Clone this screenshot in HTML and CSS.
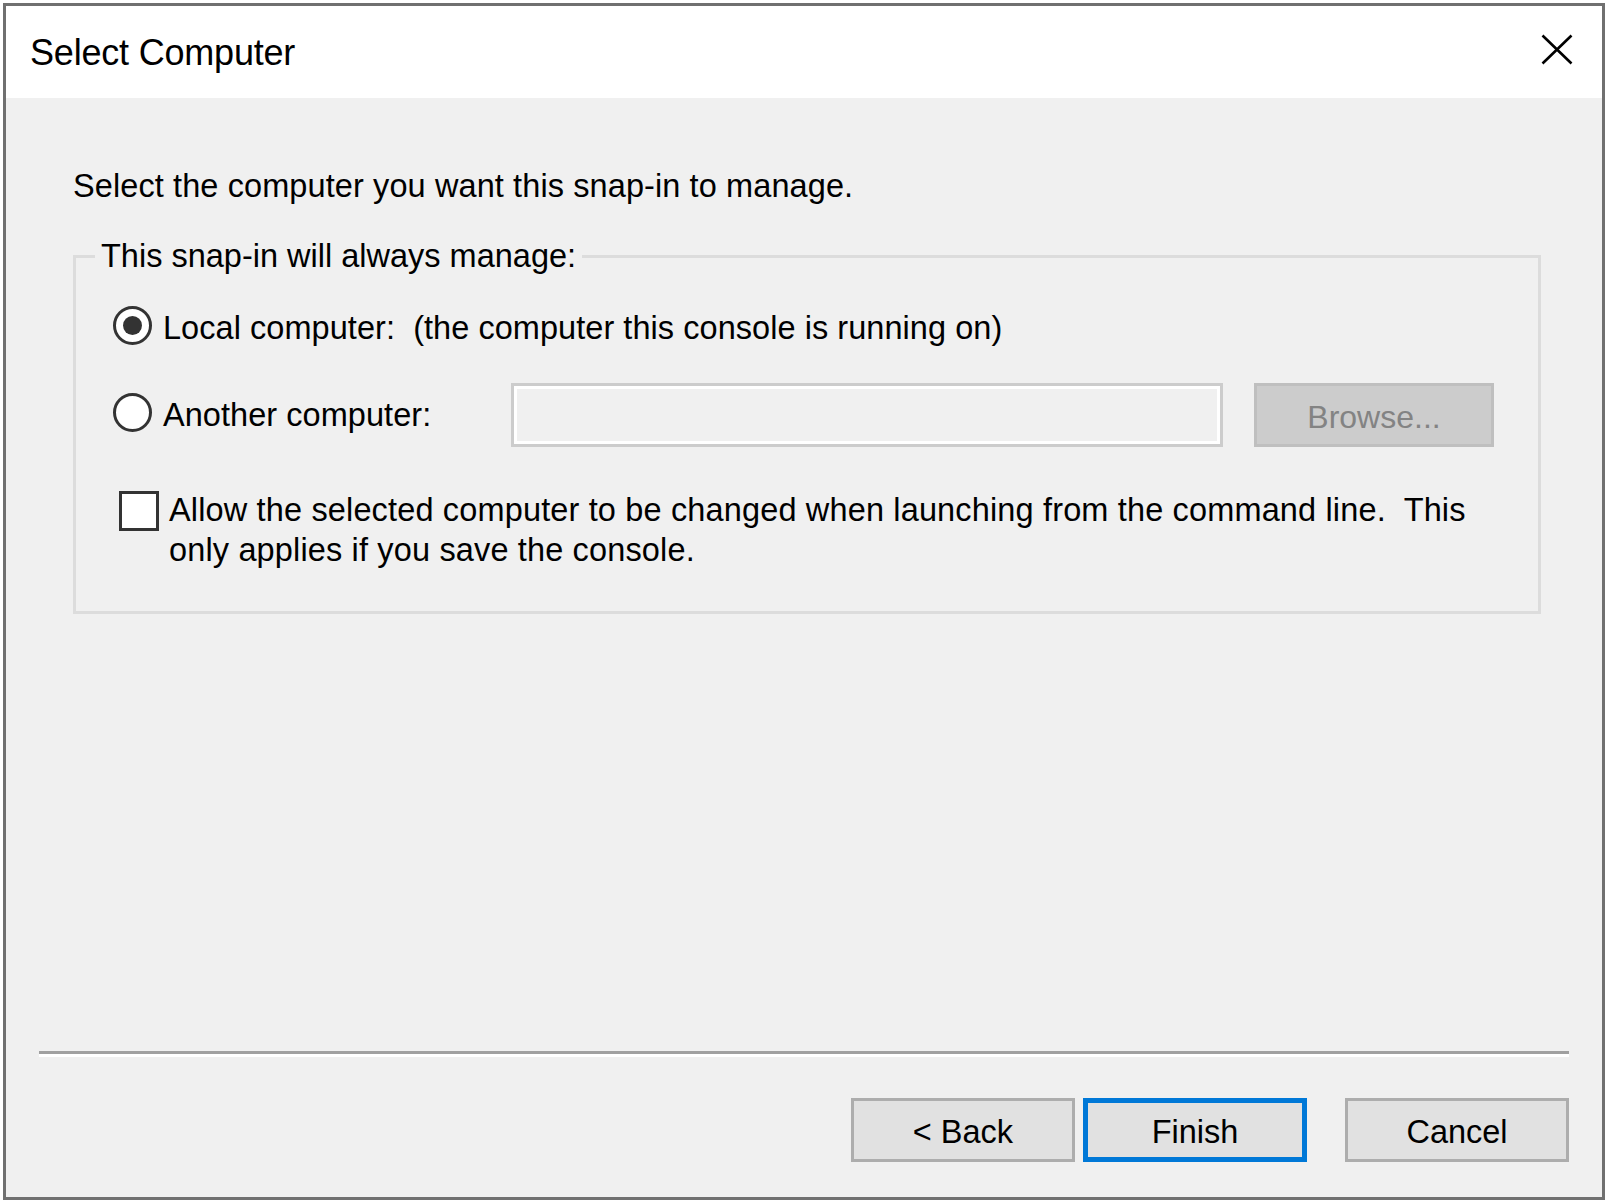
FILE: index.html
```html
<!DOCTYPE html>
<html>
<head>
<meta charset="utf-8">
<title>Select Computer</title>
<link rel="stylesheet" href="styles.css">
</head>
<body>
<div class="dialog">
  <div class="titlebar">
    <span class="title">Select Computer</span>
    <svg class="close" width="32" height="31" viewBox="0 0 32 31">
      <path d="M1.5 1.5 L30.5 29.5 M30.5 1.5 L1.5 29.5" stroke="#000" stroke-width="2.6" fill="none"/>
    </svg>
  </div>
  <div class="content">
    <p class="intro">Select the computer you want this snap-in to manage.</p>
    <fieldset class="group">
      <legend class="legend">This snap-in will always manage:</legend>
      <div class="row row-local">
        <span class="radio checked"><span class="dot"></span></span>
        <span class="label">Local computer:&nbsp; (the computer this console is running on)</span>
      </div>
      <div class="row row-other">
        <div class="radio-label">
          <span class="radio"></span>
          <span class="label">Another computer:</span>
        </div>
        <div class="textbox"></div>
        <div class="browse">Browse...</div>
      </div>
      <div class="row row-check">
        <span class="checkbox"></span>
        <span class="check-text">Allow the selected computer to be changed when launching from the command line.&nbsp; This<br>only applies if you save the console.</span>
      </div>
    </fieldset>
    <div class="spacer"></div>
    <div class="separator"></div>
    <div class="buttons">
      <div class="btn">&lt; Back</div>
      <div class="btn default">Finish</div>
      <div class="btn cancel">Cancel</div>
    </div>
  </div>
</div>
</body>
</html>
```

FILE: styles.css
```css
html, body {
  margin: 0;
  padding: 0;
  background: #ffffff;
}

body {
  font-family: "Liberation Sans", Arial, sans-serif;
  color: #000;
}

.dialog {
  box-sizing: border-box;
  width: 1602px;
  height: 1197px;
  margin: 3px 3px 2px 3px;
  border: 3px solid #707070;
  display: flex;
  flex-direction: column;
  background: #f0f0f0;
}

.titlebar {
  height: 92px;
  flex: none;
  background: #ffffff;
  display: flex;
  align-items: center;
  justify-content: space-between;
  padding: 0 29px 0 24px;
}

.title {
  font-size: 36px;
  line-height: 40px;
  letter-spacing: -0.2px;
  padding-top: 2px;
}

.close {
  display: block;
  margin-top: -6px;
}

.content {
  flex: 1;
  display: flex;
  flex-direction: column;
  padding: 68px 33px 35px 33px;
  font-size: 32.5px;
  line-height: 40px;
}

.intro {
  margin: 0 0 30px 34px;
  line-height: 40px;
  letter-spacing: 0.1px;
}

.group {
  margin: 0 28px 0 34px;
  border: 3px solid #dcdcdc;
  padding: 29px 0 41px 0;
  min-width: 0;
}

.legend {
  margin-left: 19px;
  padding: 0 6px;
  line-height: 40px;
}

.row {
  display: flex;
  align-items: center;
}

.row-local {
  height: 40px;
  padding-left: 37px;
}

.radio {
  box-sizing: border-box;
  width: 39px;
  height: 39px;
  border-radius: 50%;
  border: 3px solid #333333;
  background: #ffffff;
  flex: none;
  display: flex;
  align-items: center;
  justify-content: center;
}

.dot {
  width: 19px;
  height: 19px;
  border-radius: 50%;
  background: #333333;
}

.label {
  margin-left: 11px;
  white-space: nowrap;
  padding-top: 5px;
  letter-spacing: 0.05px;
}

.row-other {
  margin-top: 38px;
  padding-left: 37px;
}

.radio-label {
  width: 398px;
  flex: none;
  display: flex;
  align-items: center;
  margin-bottom: 6px;
}

.textbox {
  box-sizing: border-box;
  width: 712px;
  height: 64px;
  flex: none;
  border: 3px solid #cccccc;
  box-shadow: inset 0 0 0 3px #ffffff;
  background: #f0f0f0;
}

.browse {
  box-sizing: border-box;
  width: 240px;
  height: 64px;
  flex: none;
  margin-left: 31px;
  background: #cccccc;
  border: 3px solid #bfbfbf;
  color: #838383;
  display: flex;
  align-items: center;
  justify-content: center;
  font-size: 32px;
  padding-top: 3px;
}

.row-check {
  margin-top: 43px;
  align-items: flex-start;
  padding-left: 43px;
}

.checkbox {
  box-sizing: border-box;
  width: 40px;
  height: 40px;
  flex: none;
  margin-top: 1px;
  border: 3px solid #333333;
  background: #ffffff;
}

.check-text {
  margin-left: 10px;
  white-space: nowrap;
  letter-spacing: 0.15px;
}

.spacer {
  flex: 1;
}

.separator {
  height: 3px;
  background: #a0a0a0;
  border-bottom: 3px solid #ffffff;
  flex: none;
}

.buttons {
  display: flex;
  justify-content: flex-end;
  margin-top: 41px;
  flex: none;
}

.btn {
  box-sizing: border-box;
  width: 224px;
  height: 64px;
  background: #e1e1e1;
  border: 3px solid #adadad;
  display: flex;
  align-items: center;
  justify-content: center;
  font-size: 32.5px;
  padding-top: 4px;
}

.btn.default {
  margin-left: 8px;
  border: 5px solid #0078d7;
}

.btn.cancel {
  margin-left: 38px;
}
```
